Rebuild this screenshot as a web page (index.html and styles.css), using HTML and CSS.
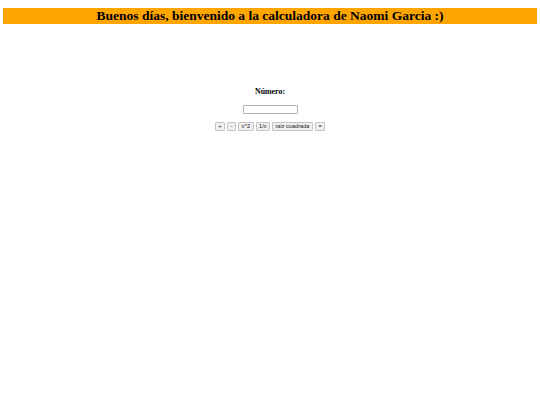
FILE: index.html
```html
<!DOCTYPE html>
<html lang="es">
<head>
<meta charset="utf-8">
<title>Calculadora</title>
<link rel="stylesheet" href="styles.css">
</head>
<body>
<h1 class="title">Buenos días, bienvenido a la calculadora de Naomi Garcia :)</h1>
<main class="calc">
  <label class="label" for="num">Número:</label>
  <input class="field" id="num" type="text">
  <div class="buttons">
    <button class="btn">+</button>
    <button class="btn">-</button>
    <button class="btn">x^2</button>
    <button class="btn">1/x</button>
    <button class="btn">raiz cuadrada</button>
    <button class="btn">=</button>
  </div>
</main>
</body>
</html>
```
FILE: styles.css
```css
html, body {
  margin: 0;
  padding: 0;
  background: #ffffff;
}
body {
  font-family: "Liberation Serif", "Times New Roman", serif;
  color: #000;
}
.title {
  margin: 8px 3.4px 0;
  background: #ffa500;
  font-size: 13.5px;
  line-height: 15.6px;
  font-weight: bold;
  text-align: center;
}
.calc {
  display: flex;
  flex-direction: column;
  align-items: center;
  padding-top: 63px;
}
.label {
  font-weight: bold;
  font-size: 7.9px;
  line-height: 9px;
}
.field {
  margin: 9.5px 0 0;
  width: 55px;
  height: 9px;
  box-sizing: border-box;
  padding: 0;
  border: 1px solid #b4b4b4;
  border-radius: 1px;
  background: #fff;
}
.buttons {
  margin-top: 8px;
  display: flex;
  gap: 2px;
}
.btn {
  height: 9px;
  box-sizing: border-box;
  padding: 0 2.5px;
  font-family: "Liberation Sans", Arial, sans-serif;
  font-size: 5.6px;
  line-height: 7px;
  color: #222;
  background: #efefef;
  border: 1px solid #c4c4c4;
  border-radius: 1px;
}
```
